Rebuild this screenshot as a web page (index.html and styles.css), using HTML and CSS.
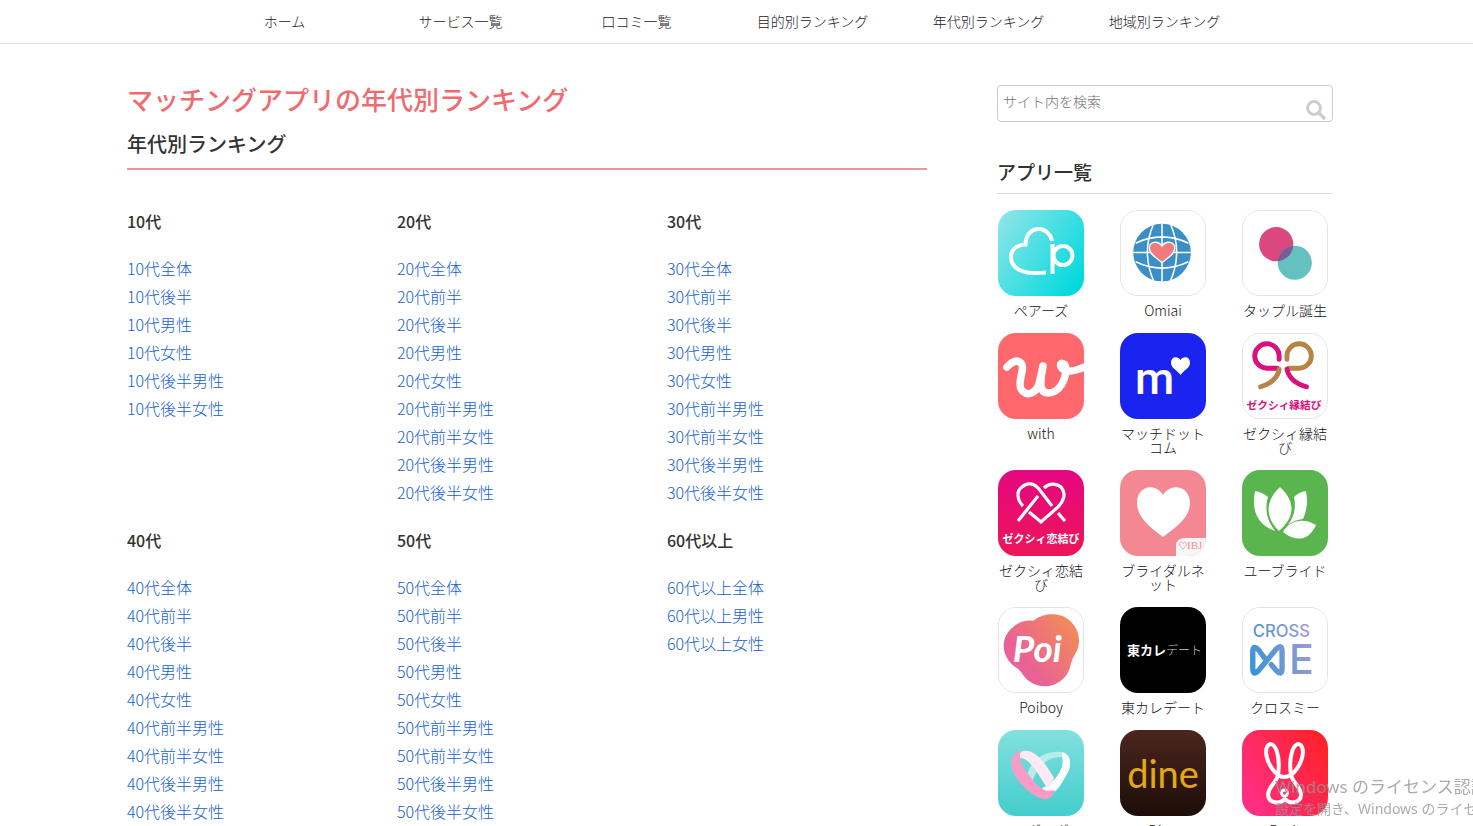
FILE: index.html
```
<!DOCTYPE html>
<html lang="ja">
<head>
<meta charset="utf-8">
<meta name="viewport" content="width=device-width, initial-scale=1">
<title>マッチングアプリの年代別ランキング</title>
<link rel="stylesheet" href="styles.css">
</head>
<body>
<header class="site-header">
  <nav class="global-nav">
    <a href="#">ホーム</a>
    <a href="#">サービス一覧</a>
    <a href="#">口コミ一覧</a>
    <a href="#">目的別ランキング</a>
    <a href="#">年代別ランキング</a>
    <a href="#">地域別ランキング</a>
  </nav>
</header>

<div class="layout">
  <main class="main">
    <h1 class="page-title">マッチングアプリの年代別ランキング</h1>
    <h2 class="section-title">年代別ランキング</h2>
    <div class="age-grid">
      <section>
        <h3>10代</h3>
        <ul>
          <li><a href="#">10代全体</a></li>
          <li><a href="#">10代後半</a></li>
          <li><a href="#">10代男性</a></li>
          <li><a href="#">10代女性</a></li>
          <li><a href="#">10代後半男性</a></li>
          <li><a href="#">10代後半女性</a></li>
        </ul>
      </section>
      <section>
        <h3>20代</h3>
        <ul>
          <li><a href="#">20代全体</a></li>
          <li><a href="#">20代前半</a></li>
          <li><a href="#">20代後半</a></li>
          <li><a href="#">20代男性</a></li>
          <li><a href="#">20代女性</a></li>
          <li><a href="#">20代前半男性</a></li>
          <li><a href="#">20代前半女性</a></li>
          <li><a href="#">20代後半男性</a></li>
          <li><a href="#">20代後半女性</a></li>
        </ul>
      </section>
      <section>
        <h3>30代</h3>
        <ul>
          <li><a href="#">30代全体</a></li>
          <li><a href="#">30代前半</a></li>
          <li><a href="#">30代後半</a></li>
          <li><a href="#">30代男性</a></li>
          <li><a href="#">30代女性</a></li>
          <li><a href="#">30代前半男性</a></li>
          <li><a href="#">30代前半女性</a></li>
          <li><a href="#">30代後半男性</a></li>
          <li><a href="#">30代後半女性</a></li>
        </ul>
      </section>
      <section>
        <h3>40代</h3>
        <ul>
          <li><a href="#">40代全体</a></li>
          <li><a href="#">40代前半</a></li>
          <li><a href="#">40代後半</a></li>
          <li><a href="#">40代男性</a></li>
          <li><a href="#">40代女性</a></li>
          <li><a href="#">40代前半男性</a></li>
          <li><a href="#">40代前半女性</a></li>
          <li><a href="#">40代後半男性</a></li>
          <li><a href="#">40代後半女性</a></li>
        </ul>
      </section>
      <section>
        <h3>50代</h3>
        <ul>
          <li><a href="#">50代全体</a></li>
          <li><a href="#">50代前半</a></li>
          <li><a href="#">50代後半</a></li>
          <li><a href="#">50代男性</a></li>
          <li><a href="#">50代女性</a></li>
          <li><a href="#">50代前半男性</a></li>
          <li><a href="#">50代前半女性</a></li>
          <li><a href="#">50代後半男性</a></li>
          <li><a href="#">50代後半女性</a></li>
        </ul>
      </section>
      <section>
        <h3>60代以上</h3>
        <ul>
          <li><a href="#">60代以上全体</a></li>
          <li><a href="#">60代以上男性</a></li>
          <li><a href="#">60代以上女性</a></li>
        </ul>
      </section>
    </div>
  </main>

  <aside class="sidebar">
    <form class="search" role="search">
      <input type="search" placeholder="サイト内を検索" aria-label="サイト内を検索">
      <button type="submit" aria-label="検索">
        <svg viewBox="0 0 20 20"><circle cx="8" cy="8" r="6.4" fill="none" stroke="#ccc" stroke-width="3"/><path d="M13 13l5 5" stroke="#ccc" stroke-width="3.4" stroke-linecap="round"/></svg>
      </button>
    </form>
    <h2 class="side-title">アプリ一覧</h2>
    <div class="apps">
      <a class="app" href="#">
        <svg viewBox="0 0 86 86"><defs><linearGradient id="gPairs" x1="0" y1="0.1" x2="1" y2="0.8"><stop offset="0" stop-color="#8ee5e8"/><stop offset="1" stop-color="#00d9de"/></linearGradient></defs>
          <rect width="86" height="86" fill="url(#gPairs)"/>
          <g fill="none" stroke="#fff" stroke-width="4"><path d="M48 62.500Q30 64 24 61C16 58 13 53 13 47C13 39 19 35 27.500 34.500C28 14 51 15 54 31"/><path d="M54.500 34V64"/><circle cx="65" cy="45.500" r="9.500"/></g></svg>
        <span>ペアーズ</span>
      </a>
      <a class="app framed" href="#">
        <svg viewBox="0 0 86 86"><defs><clipPath id="cGlobe"><circle cx="42" cy="42.500" r="29.500"/></clipPath></defs>
          <rect width="86" height="86" fill="#fff"/><circle cx="42" cy="42.500" r="29.500" fill="#3b8fc8"/>
          <g clip-path="url(#cGlobe)" fill="none" stroke="#fff" stroke-width="1.600"><path d="M42 12V73M12 42.500H73M15 33Q42 20 69 33M15 52Q42 65 69 52M34 12Q20 42 34 73M50 12Q64 42 50 73"/></g>
          <path d="M42 53C37 48 29 45 29 38C29 31 38 30 42 36C46 30 55 31 55 38C55 45 47 48 42 53Z" fill="#ef7b7c" stroke="#fff" stroke-width="1.400"/></svg>
        <span>Omiai</span>
      </a>
      <a class="app framed" href="#">
        <svg viewBox="0 0 86 86"><defs><clipPath id="cTap"><circle cx="34" cy="34" r="17.500"/></clipPath></defs>
          <rect width="86" height="86" fill="#fff"/><circle cx="34" cy="34" r="17.500" fill="#da487f"/><circle cx="53" cy="53" r="17.500" fill="#65c1c0"/><circle cx="53" cy="53" r="17.500" fill="#7b5c98" clip-path="url(#cTap)"/></svg>
        <span>タップル誕生</span>
      </a>
      <a class="app" href="#">
        <svg viewBox="0 0 86 86"><rect width="86" height="86" fill="#ff696e"/>
          <path d="M9 34C13 29 19 26 23 30C28 35 19 48 23 56C28 65 38 60 41 51L45 33C42 49 41 60 50 60C62 60 68 46 68 35C67 29 61 29 63 34C67 41 78 38 89 33" fill="none" stroke="#fff" stroke-width="7.500" stroke-linecap="round" stroke-linejoin="round"/></svg>
        <span>with</span>
      </a>
      <a class="app" href="#">
        <svg viewBox="0 0 86 86"><rect width="86" height="86" fill="#1b23f0"/><text x="15" y="61" class="logo-m">m</text><path d="M60.500 42C57 37 51 35 51 30C51 23 58 23 60.500 27C63 23 70 23 70 30C70 35 64 37 60.500 42Z" fill="#fff"/></svg>
        <span>マッチドットコム</span>
      </a>
      <a class="app framed" href="#">
        <svg viewBox="0 0 86 86"><rect width="86" height="86" fill="#fff"/>
          <g fill="none" stroke-width="5" stroke-linecap="round"><path d="M37 26V23A12.500 12.500 0 1 0 25 35H35" stroke="#d9117e"/><path d="M45 26V23A12.500 12.500 0 1 1 57 35H47" stroke="#b58446"/><path d="M37 36C36 44 29 51 18 54" stroke="#b58446"/><path d="M45 36C47 45 54 51 65 54" stroke="#d9117e"/></g>
          <text x="42" y="77" class="logo-zexy pink">ゼクシィ縁結び</text></svg>
        <span>ゼクシィ縁結び</span>
      </a>
      <a class="app" href="#">
        <svg viewBox="0 0 86 86"><defs><linearGradient id="gKoi" x1="0" y1="0" x2="0" y2="1"><stop offset="0" stop-color="#e40781"/><stop offset="1" stop-color="#ed1558"/></linearGradient></defs><rect width="86" height="86" fill="url(#gKoi)"/>
          <g fill="none" stroke="#fff" stroke-width="3.200"><path d="M25 36C19 30 18 21 24 17C29 12 36 13 41 19L54 36M46 18C51 13 58 13 63 17C69 24 65 32 60 37L43 52L31 42M40 26L20 51M60 43L67 51"/></g>
          <text x="43" y="73" class="logo-zexy">ゼクシィ恋結び</text></svg>
        <span>ゼクシィ恋結び</span>
      </a>
      <a class="app" href="#">
        <svg viewBox="0 0 86 86"><rect width="86" height="86" fill="#f48892"/><path d="M43 67C33 59 17 49 17 33C17 16 35 12 43 25C51 12 70 16 70 33C70 49 53 59 43 67Z" fill="#fff"/><path d="M56 86V76Q56 68 66 68H86V86Z" fill="#f6f6f6"/><path d="M63 79C61 77 59.500 76 59.500 74C59.500 72 62 71.500 63 73.500C64 71.500 66.500 72 66.500 74C66.500 76 65 77 63 79Z" fill="none" stroke="#f3a0a7"/><text x="67" y="79" class="logo-ibj">IBJ</text></svg>
        <span>ブライダルネット</span>
      </a>
      <a class="app" href="#">
        <svg viewBox="0 0 86 86"><rect width="86" height="86" fill="#5bb54e"/><g fill="#fff"><path d="M38 17C54 32 53 47 37 61C23 47 23 31 38 17Z"/><path d="M13 21Q20 22 26 27C22 41 26 52 33 61C16 55 9 41 13 21Z"/><path d="M64 21Q57 22 52 27C54 36 53 46 46 55Q52 50 61 49Q67 36 64 21Z"/><path d="M41 62C48 49 63 48 74 55C67 70 55 73 41 62Z"/></g></svg>
        <span>ユーブライド</span>
      </a>
      <a class="app framed" href="#">
        <svg viewBox="0 0 86 86"><defs><linearGradient id="gPoi" gradientUnits="userSpaceOnUse" x1="15" y1="65" x2="75" y2="20"><stop offset="0.200" stop-color="#e96196"/><stop offset="1" stop-color="#f2895a"/></linearGradient></defs><rect width="86" height="86" fill="#fff"/>
          <path d="M35 13C47 4 62 5 70 11C83 20 85 37 78 47C75 52 74 55 73 60C68 79 46 86 31 75C25 71 25 67 19 62C1 51 1 30 14 20C20 14 28 12 35 13Z" fill="url(#gPoi)"/>
          <text x="14" y="55" class="logo-poi">Poi</text></svg>
        <span>Poiboy</span>
      </a>
      <a class="app" href="#">
        <svg viewBox="0 0 86 86"><rect width="86" height="86"/><text x="7" y="48" class="logo-toukare">東カレ<tspan class="thin">デート</tspan></text></svg>
        <span>東カレデート</span>
      </a>
      <a class="app framed" href="#">
        <svg viewBox="0 0 86 86"><defs><linearGradient id="gCross" gradientUnits="userSpaceOnUse" x1="8" y1="55" x2="76" y2="35"><stop offset="0" stop-color="#3b95d3"/><stop offset="1" stop-color="#a79bd0"/></linearGradient></defs><rect width="86" height="86" fill="#fff"/>
          <g fill="url(#gCross)"><text x="10" y="30" class="logo-cross">CROSS</text><text x="47" y="68" class="logo-e">E</text></g>
          <path d="M22 51L16 43Q10 37 10 45V62Q10 70 16 64L34 42Q40 36 40 45V62Q40 70 34 64L29 58" fill="none" stroke="url(#gCross)" stroke-width="5.500" stroke-linecap="round"/></svg>
        <span>クロスミー</span>
      </a>
      <a class="app" href="#">
        <svg viewBox="0 0 86 86"><defs><linearGradient id="gIviv" x1="0" y1="0" x2="0" y2="1"><stop offset="0" stop-color="#82e0df"/><stop offset="1" stop-color="#43cdcc"/></linearGradient></defs><rect width="86" height="86" fill="url(#gIviv)"/>
          <path d="M29 45C33 31 45 20 64 22V27C51 26 41 35 34 51Z" fill="#b8eceb"/>
          <path d="M64 22C76 25 72 40 69 44C64 53 60 60 56 62Q48 64 44 58C53 55 68 41 64 26Z" fill="#fff"/>
          <path d="M22 22C35 16 47 32 56 48L50 59C42 48 32 27 22 28Z" fill="#ffeaf3"/>
          <path d="M24 21C18 26 24 35 28 41C35 51 43 61 51 61L57 60C55 67 50 70 45 69C29 65 9 42 14 28Q17 21 24 21Z" fill="#f99bc7"/></svg>
        <span>イヴイヴ</span>
      </a>
      <a class="app" href="#">
        <svg viewBox="0 0 86 86"><defs><linearGradient id="gDine" x1="0" y1="0" x2="0" y2="1"><stop offset="0" stop-color="#4b261d"/><stop offset="1" stop-color="#1d0d09"/></linearGradient></defs><rect width="86" height="86" fill="url(#gDine)"/><text x="43" y="58" class="logo-dine">dine</text></svg>
        <span>Dine</span>
      </a>
      <a class="app" href="#">
        <svg viewBox="0 0 86 86"><defs><linearGradient id="gRavit" x1="0" y1="0.800" x2="1" y2="0.200"><stop offset="0" stop-color="#ff2f88"/><stop offset="1" stop-color="#ff2229"/></linearGradient></defs><rect width="86" height="86" fill="url(#gRavit)"/>
          <g fill="none" stroke="#fff" stroke-width="4" stroke-linejoin="round"><path d="M36 45C27 38 22 24 25 17C28 11 33 15 35 22Q38 32 36 45ZM49 45C58 38 63 24 60 17C57 11 52 15 50 22Q47 32 49 45Z"/><path d="M36 45Q42 49 49 45C50 52 59 57 59 65C58 74 47 74 43 69C38 74 27 74 26 65C26 57 35 52 36 45Z"/><circle cx="42.500" cy="63" r="3" stroke-width="3"/></g></svg>
        <span>Ravit</span>
      </a>
    </div>
  </aside>
</div>

<div class="os-notice">
  <p class="os-title">Windows のライセンス認証</p>
  <p>設定を開き、Windows のライセンス</p>
</div>
</body>
</html>
```
FILE: styles.css
```
* { box-sizing: border-box; }

body {
  margin: 0;
  background: #fff;
  color: #333;
  font-family: "Noto Sans CJK JP", sans-serif;
  font-weight: 300;
  font-size: 16px;
  line-height: 28px;
}

h1, h2, h3, ul, p { margin: 0; padding: 0; }
ul { list-style: none; }
a { color: #1460d0; text-decoration: none; }

.site-header {
  border-bottom: 1px solid #ddd;
  padding-right: 24px;
}

.global-nav {
  display: grid;
  grid-template-columns: repeat(6, 1fr);
  max-width: 1056px;
  margin: 0 auto;
  padding: 7px 0 8px;
}

.global-nav a {
  color: #222;
  font-size: 14px;
  text-align: center;
}

.layout {
  display: flex;
  justify-content: center;
  gap: 70px;
  padding: 41px 140px 0 127px;
}

.main { flex: 1 1 800px; max-width: 800px; }
.sidebar { flex: 0 0 336px; }

.page-title {
  margin-bottom: 17px;
  color: #ee6b70;
  font-size: 26px;
  font-weight: 500;
}

.section-title {
  padding-bottom: 10px;
  border-bottom: 2px solid #e39a9c;
  font-size: 20px;
  font-weight: 500;
}

.age-grid {
  display: grid;
  grid-template-columns: repeat(3, 1fr);
  gap: 20px 10px;
  padding-top: 37px;
}

.age-grid h3 {
  margin-bottom: 19px;
  font-size: 16px;
  font-weight: 500;
}

.search { position: relative; }

.search input {
  display: block;
  width: 100%;
  height: 37px;
  padding: 0 32px 6px 5px;
  border: 1px solid #ccc;
  border-radius: 4px;
  background: #fff;
  color: #333;
  font: inherit;
  font-size: 14px;
  appearance: none;
  outline: none;
}

.search input::placeholder { color: #757575; opacity: 1; }

.search button {
  position: absolute;
  right: 7px;
  bottom: 2px;
  width: 20px;
  height: 20px;
  padding: 0;
  border: 0;
  background: none;
}

.search svg { display: block; }

.side-title {
  margin: 36px 0 16px;
  padding-bottom: 7px;
  border-bottom: 1px solid #ddd;
  font-size: 19px;
  font-weight: 500;
}

.apps {
  display: grid;
  grid-template-columns: repeat(3, 86px);
  gap: 16px 36px;
  padding-left: 1px;
}

.app {
  display: flex;
  flex-direction: column;
  gap: 7px;
  color: #111;
  font-size: 14px;
  line-height: 14px;
  text-align: center;
}

.app svg {
  display: block;
  width: 86px;
  height: 86px;
  border-radius: 18px;
}

.framed svg { border: 1px solid #e3e3e3; }

.logo-m { fill: #fff; font: 500 45px Roboto, sans-serif; }
.logo-zexy { fill: #fff; font: 700 11px "Noto Sans CJK JP", sans-serif; text-anchor: middle; }
.pink { fill: #d9117e; }
.logo-ibj { fill: #f08f98; font: 11px "Liberation Serif", serif; }
.logo-poi { fill: #fff; font: italic 700 38px Lato, sans-serif; }
.logo-toukare { fill: #fff; font: 700 13px "Noto Sans CJK JP", sans-serif; }
.thin { fill: #ccc; font-size: 12px; font-weight: 300; }
.logo-cross { font: 500 17px Inter, sans-serif; }
.logo-e { font: 500 42px Inter, sans-serif; }
.logo-dine { fill: #e2aa12; font: 400 38px Lato, sans-serif; text-anchor: middle; }

/* Activation notice floating over the page corner */
.os-notice {
  position: fixed;
  right: 0;
  bottom: 6px;
  width: 198px;
  overflow: hidden;
  color: rgba(150, 150, 150, 0.8);
  font-family: "Noto Sans", "Noto Sans CJK JP", sans-serif;
  font-size: 14px;
  font-weight: 400;
  line-height: 22px;
  white-space: nowrap;
  pointer-events: none;
}

.os-title { font-size: 17px; }
```
